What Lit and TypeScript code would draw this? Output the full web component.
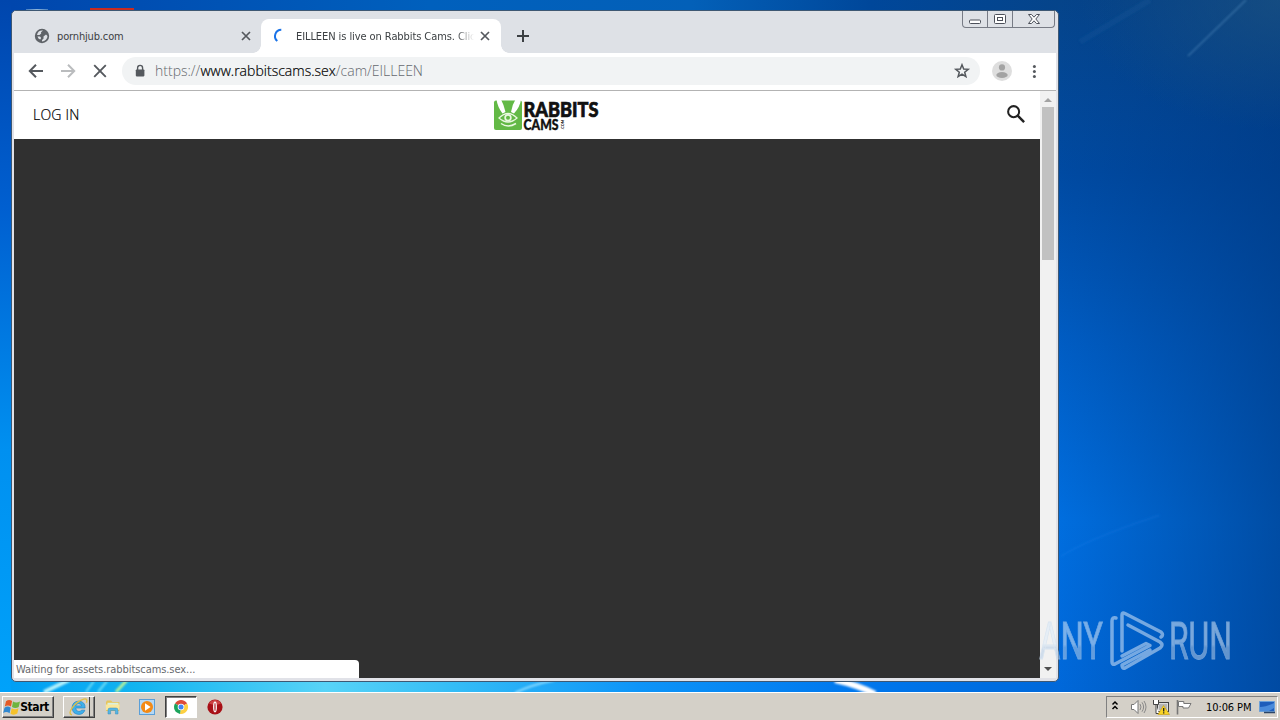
import { LitElement, html, css, svg } from 'lit';
import { customElement, property } from 'lit/decorators.js';

@customElement('desktop-wallpaper')
export class DesktopWallpaper extends LitElement {
  static styles = css`
    :host {
      display: block;
    }

    svg {
      display: block;
      width: 100%;
      height: 100%;
    }
  `;

  render() {
    return html`
      <svg viewBox="0 0 1280 692" preserveAspectRatio="none">
        <defs>
          <linearGradient id="left" x1="0" y1="0" x2="0" y2="1">
            <stop offset="0" stop-color="#0046ad" />
            <stop offset=".3" stop-color="#005fd0" />
            <stop offset=".65" stop-color="#0090f0" />
            <stop offset="1" stop-color="#00a2fa" />
          </linearGradient>
          <linearGradient id="top">
            <stop offset="0" stop-color="#0046ad" />
            <stop offset=".4" stop-color="#0060bd" />
            <stop offset=".65" stop-color="#0360b8" />
            <stop offset=".82" stop-color="#00479a" />
            <stop offset="1" stop-color="#05448a" />
          </linearGradient>
          <linearGradient id="bottom">
            <stop offset="0" stop-color="#009ff5" />
            <stop offset=".12" stop-color="#12b4f0" />
            <stop offset=".3" stop-color="#58d3f7" />
            <stop offset=".42" stop-color="#35bdf6" />
            <stop offset=".6" stop-color="#0d94f8" />
            <stop offset=".8" stop-color="#0078ee" />
            <stop offset="1" stop-color="#0068da" />
          </linearGradient>
          <linearGradient id="right" x1="0" y1="0" x2="0" y2="1">
            <stop offset="0" stop-color="#05448a" />
            <stop offset=".25" stop-color="#004aa2" />
            <stop offset=".5" stop-color="#005dc4" />
            <stop offset=".75" stop-color="#006edf" />
            <stop offset="1" stop-color="#0068da" />
          </linearGradient>
          <linearGradient id="shade">
            <stop offset="0" stop-color="#003880" stop-opacity="0" />
            <stop offset="1" stop-color="#003880" stop-opacity=".62" />
          </linearGradient>
          <radialGradient id="haze" cx="1" cy="0" r="1">
            <stop offset="0" stop-color="#215680" stop-opacity=".6" />
            <stop offset="1" stop-color="#215680" stop-opacity="0" />
          </radialGradient>
          <filter id="soft"><feGaussianBlur stdDeviation="1" /></filter>
        </defs>
        <rect width="30" height="692" fill="url(#left)" />
        <rect x="11" width="1048" height="20" fill="url(#top)" />
        <rect x="11" y="675" width="1048" height="17" fill="url(#bottom)" />
        <rect x="1058" width="222" height="692" fill="url(#right)" />
        <rect x="1058" width="222" height="692" fill="url(#shade)" />
        <rect x="1080" width="200" height="130" fill="url(#haze)" />
        <path d="M90 8h44v3H90z" fill="#c92b20" />
        <path d="M26 10q11-1 22 0" fill="none" stroke="#8eb5d8" />
        <g filter="url(#soft)" fill="none">
          <path d="M1246 0L1188 56" stroke="#5d96c6" stroke-width="1.500" opacity=".5" />
          <path d="M1150 0L1080 42" stroke="#2f70ad" stroke-width="6" opacity=".15" />
          <path d="M1060 557Q1085 540 1160 515" stroke="#2b91ff" stroke-width="3" opacity=".1" />
          <path d="M69 680L44 692" stroke="#b8f2fb" stroke-width="4" />
          <path d="M94 681L86 692M107 681L98 692" stroke="#8be7f5" stroke-width="2" opacity=".8" />
          <path d="M127 680L116 692" stroke="#b7f29a" stroke-width="3" />
          <path d="M555 680Q530 685 515 693" stroke="#8fdcff" stroke-width="2" />
          <path d="M835 680Q858 685 875 694" stroke="#fff" stroke-width="6" />
        </g>
      </svg>
    `;
  }
}

@customElement('tool-icon')
export class ToolIcon extends LitElement {
  @property() name = '';

  static styles = css`
    :host {
      display: block;
      flex: none;
      width: 16px;
      height: 16px;
    }

    svg {
      display: block;
      width: 100%;
      height: 100%;
      overflow: visible;
    }
  `;

  static shapes: Record<string, unknown> = {
    globe: svg`
      <circle cx="8" cy="8" r="7.200" fill="#5f6368" />
      <path d="M9 2.600L7 4.200 7.200 5.600 5.500 7H3A5.600 5.600 0 0 1 9 2.600zM9.500 8.500L12 6.500 13.500 8A5.600 5.600 0 0 1 8 13.500V12L9.500 10.800zM3.500 8.600H6L7.200 10 6.200 11.500Q4 11 3.500 8.600z" fill="#dee1e6" />`,
    close: svg`<path d="M4 4l8 8M12 4l-8 8" stroke="#55595e" stroke-width="1.700" />`,
    plus: svg`<path d="M8 2v12M2 8h12" stroke="#3c4043" stroke-width="2" />`,
    spinner: svg`<path d="M8.300 1.700A6.400 6.400 0 0 0 4.300 13" fill="none" stroke="#1a73e8" stroke-width="2" />`,
    back: svg`<path d="M15 8H2M8 1.800L1.800 8 8 14.200" fill="none" stroke="#55595e" stroke-width="2" />`,
    forward: svg`<path d="M1 8h13M8 1.800L14.200 8 8 14.200" fill="none" stroke="#babcbe" stroke-width="2" />`,
    stop: svg`<path d="M2.200 2.200l11.600 11.600M13.800 2.200L2.200 13.800" stroke="#55595e" stroke-width="1.900" />`,
    lock: svg`
      <rect x="3.800" y="6.400" width="8.600" height="7" rx=".8" fill="#55595e" />
      <path d="M5.600 7V4.900a2.500 2.500 0 0 1 5 0V7" fill="none" stroke="#55595e" stroke-width="1.400" />`,
    star: svg`<path d="M8 1.800L9.700 6 14.200 6.300 10.700 9.200 11.900 13.700 8 11.200 4.100 13.700 5.300 9.200 1.800 6.300 6.300 6z" fill="none" stroke="#55595e" stroke-width="1.500" />`,
    avatar: svg`
      <circle cx="8" cy="8" r="10" fill="#dedede" />
      <circle cx="8" cy="4.400" r="3.100" fill="#a3a3a3" />
      <ellipse cx="8" cy="12" rx="5.700" ry="3" fill="#a3a3a3" />`,
    menu: svg`
      <circle cx="8.400" cy="3.400" r="1.500" fill="#55595e" />
      <circle cx="8.400" cy="8.400" r="1.500" fill="#55595e" />
      <circle cx="8.400" cy="13.400" r="1.500" fill="#55595e" />`,
    search: svg`
      <path d="M9.300 9.300l5.900 5.900" stroke="#222" stroke-width="2.200" />
      <circle cx="5.900" cy="5.900" r="4.900" fill="none" stroke="#222" stroke-width="1.800" />`,
    minimize: svg`<rect x="2.500" y="9" width="11" height="3.500" rx="1" fill="#fff" stroke="#4c505a" />`,
    maximize: svg`
      <rect x="2.500" y="3.500" width="11" height="9" rx="1" fill="#fff" stroke="#4c505a" />
      <rect x="5.500" y="6.500" width="5" height="3" fill="#fff" stroke="#4c505a" />`,
    quit: svg`
      <path d="M2.500 3.500h3L8 6.200l2.500-2.700h3L9.800 8l3.700 4.500h-3L8 9.800l-2.500 2.700h-3L6.200 8z" fill="#fff" stroke="#4c505a" />`,
    windows: svg`
      <path d="M2 2.200Q5-.2 8.100 2L7 7.600Q4 5.600.8 7.600z" fill="#e45a26" />
      <path d="M9 2.500Q12 4.300 16 2.500L14.700 8Q11.500 10 8 8z" fill="#6eb43f" />
      <path d="M.5 8.800Q3.600 6.500 6.700 8.700L5.600 14.300Q2.500 12-.8 14z" fill="#3188d0" />
      <path d="M7.700 9.200Q11 11.200 14.500 9.200L13.300 14.600Q10 16.800 6.500 14.800z" fill="#f6c22b" />`,
    explorer: svg`
      <path d="M14.300 8.900H5.900Q6.200 12 8.800 12q1.700 0 2.300-1.200h3Q12.800 14.600 8.600 14.600 3 14.200 2.700 8.700 3 3 8.600 2.800q6 .3 5.700 6.100zM5.900 7h5.300Q10.900 5 8.600 5 6.300 5 5.900 7z" fill="#3fb0ea" stroke="#2383c6" stroke-width=".6" />
      <path d="M2.600 15Q-1 14 3 8.500T13 1q4-1 2.500 3.300" fill="none" stroke="#e2bf43" stroke-width="1.200" />`,
    folder: svg`
      <path d="M1 3l1-1.500h4L7.500 3h6.800v9H1z" fill="#e7c55b" />
      <path d="M2.500 3.800h11v5H2.500z" fill="#d9f0de" />
      <path d="M.7 5.500h14l-.6 5.500H1z" fill="#fae79b" />
      <path d="M3 15v-4q0-2 2-2h6q2 0 2 2v4h-2.600v-3.500H5.600V15z" fill="#55b5e3" stroke="#398eba" stroke-width=".5" />`,
    player: svg`
      <rect x=".5" y=".5" width="15" height="15" fill="#b4d8f5" stroke="#5a9fd8" />
      <circle cx="8" cy="8" r="6" fill="#f38a15" />
      <path d="M6 4.300L11.600 8 6 11.700z" fill="#fff" />`,
    chrome: svg`
      <path d="M8 8L2 4.500A7 7 0 0 1 14.100 4.600z" fill="#dd4b39" />
      <path d="M8 8l6.100-3.500A7 7 0 0 1 8 15l-1-.1z" fill="#fdd042" />
      <path d="M8 8l-1 6.900A7 7 0 0 1 2 4.400z" fill="#1ca45c" />
      <circle cx="8" cy="8" r="3.300" fill="#fff" />
      <circle cx="8" cy="8" r="2.500" fill="#4285f4" />`,
    opera: svg`
      <circle cx="8" cy="8" r="7.600" fill="#a80f16" />
      <path d="M2 4.500a7 7 0 0 1 12 0Q8 7 2 4.500z" fill="#dc5555" opacity=".7" />
      <ellipse cx="8" cy="8" rx="1.900" ry="5.400" fill="#fff" />
      <ellipse cx="8" cy="8" rx=".6" ry="4.300" fill="#a80f16" />`,
    chevrons: svg`<path d="M5.500 5.500L8 3l2.500 2.500M5.500 10L8 7.500l2.500 2.500" fill="none" stroke="#000" stroke-width="1.500" />`,
    volume: svg`
      <path d="M1.500 5.500H4L8 1.500v13L4 10.500H1.500z" fill="#fff" stroke="#777" />
      <path d="M10 5q2 3 0 6M12 3.300q3.200 4.700 0 9.400M14 2q4 6 0 12" fill="none" stroke="#898989" />`,
    network: svg`
      <rect x="4.500" y="3.500" width="11" height="9" fill="#ddd" stroke="#444" />
      <path d="M6 5h8v6H6z" fill="#b5b5b5" />
      <path d="M.5 1v4.500h5V1M3 5.500v9h3" fill="#fff" stroke="#444" />
      <path d="M1 1.500h4V5H1z" fill="#fff" />
      <path d="M10.500 6.500L16.500 15.500H5z" fill="#f9d425" stroke="#c69b0a" stroke-width=".6" />
      <path d="M10.700 9v3.400M10.700 13.300v1.200" stroke="#222" stroke-width="1.300" />`,
    flag: svg`
      <path d="M1.500 1v14.500" stroke="#777" stroke-width="1.600" />
      <path d="M2.500 2.500h5.300v2H15L12.500 9H7V7.500H2.500z" fill="#fff" stroke="#777" />`,
    monitor: svg`
      <path d="M.5 2.500h15v10H.5z" fill="#1e5dbb" stroke="#6ba0d9" />
      <path d="M1 8Q7 8 15 4v5L10 12H1z" fill="#4a8bdb" />
      <path d="M5 13.500h11" stroke="#2b4568" stroke-width="1.500" />`,
    up: svg`<path d="M4 11l4-4 4 4z" fill="#a3a3a3" />`,
    down: svg`<path d="M4 5h8L8 9z" fill="#505050" />`,
  };

  render() {
    return html`<svg viewBox="0 0 16 16">${ToolIcon.shapes[this.name]}</svg>`;
  }
}

@customElement('browser-window')
export class BrowserWindow extends LitElement {
  static styles = css`
    :host {
      display: flex;
      flex-direction: column;
      box-sizing: border-box;
      border: 1px solid #3e5873;
      border-radius: 5px;
      padding: 0 2px 3px;
      background: #e1e2e8;
      overflow: hidden;
      font-family: 'DejaVu Sans Condensed', 'DejaVu Sans', sans-serif;
      font-stretch: condensed;
      font-size: 11px;
      color: #3c4043;
    }

    .tabs {
      position: relative;
      display: flex;
      height: 42px;
      padding-left: 7px;
      box-sizing: border-box;
      background: #dee1e6;
      align-items: flex-end;
    }

    .tab {
      position: relative;
      display: flex;
      align-items: center;
      box-sizing: border-box;
      width: 240px;
      height: 34px;
      padding: 0 7px 0 13px;
    }

    .tab.active {
      background: #fff;
      border-radius: 8px 8px 0 0;
      padding: 0 8px 0 12px;
    }

    .tab.active::before,
    .tab.active::after {
      content: '';
      position: absolute;
      bottom: 0;
      width: 8px;
      height: 8px;
    }

    .tab.active::before {
      left: -8px;
      background: radial-gradient(circle at 0 0, transparent 7.5px, #fff 8px);
    }

    .tab.active::after {
      right: -8px;
      background: radial-gradient(circle at 100% 0, transparent 7.5px, #fff 8px);
    }

    .title {
      flex: 1;
      margin: 0 7px;
      letter-spacing: -0.15px;
      white-space: nowrap;
      overflow: hidden;
    }

    .active .title {
      margin: 0 3px 0 7px;
      letter-spacing: -0.08px;
      mask-image: linear-gradient(90deg, #000 90%, transparent);
    }

    .new {
      margin: 0 0 9px 14px;
    }

    .controls {
      position: absolute;
      top: 0;
      right: 1px;
      display: flex;
      box-sizing: border-box;
      width: 93px;
      height: 17px;
      border: 1px solid #777b85;
      border-top: 0;
      border-radius: 0 0 4px 4px;
    }

    .control {
      display: flex;
      justify-content: center;
      width: 24px;
      border-right: 1px solid #777b85;
    }

    .control:last-child {
      flex: 1;
      border: 0;
    }

    .toolbar {
      display: flex;
      align-items: center;
      box-sizing: border-box;
      height: 38px;
      padding: 0 14px 2px;
      background: #fff;
      border-bottom: 1px solid #b3b3b3;
    }

    .nav {
      display: flex;
      gap: 16px;
    }

    .address {
      flex: 1;
      display: flex;
      align-items: center;
      height: 28px;
      margin: 0 14px;
      padding: 0 10px;
      border-radius: 14px;
      background: #f1f3f4;
    }

    .url {
      flex: 1;
      margin-left: 7px;
      font: 300 14px 'Open Sans', 'Noto Sans', sans-serif;
      color: #65696e;
      white-space: nowrap;
    }

    .host {
      color: #000;
      -webkit-text-stroke: 0.2px #000;
      letter-spacing: 0.02px;
    }

    .menu {
      margin-left: 16px;
    }

    .body {
      flex: 1;
      display: flex;
      min-height: 0;
    }

    .page {
      flex: 1;
      display: flex;
      flex-direction: column;
      background: #303030;
    }

    .header {
      display: grid;
      grid-template-columns: 1fr auto 1fr;
      align-items: center;
      height: 48px;
      padding: 0 15px 0 19px;
      background: #fff;
    }

    .login {
      margin-bottom: 1px;
      font: 300 14px 'Open Sans', sans-serif;
      letter-spacing: 0.2px;
      color: #000;
      -webkit-text-stroke: 0.2px #000;
    }

    .logo {
      width: 106px;
      height: 34px;
      margin-left: 34px;
      overflow: visible;
    }

    .search {
      justify-self: end;
      width: 18px;
      height: 18px;
      margin-bottom: 2px;
    }

    .status {
      margin-top: auto;
      box-sizing: border-box;
      width: 345px;
      height: 18px;
      padding-left: 2px;
      border-radius: 0 4px 0 0;
      background: #fff;
      line-height: 19px;
      letter-spacing: -0.07px;
      color: #66696d;
    }

    .scrollbar {
      display: flex;
      flex-direction: column;
      align-items: center;
      width: 16px;
      background: #f1f1f1;
    }

    .thumb {
      width: 12px;
      height: 153px;
      background: #c1c1c1;
    }

    .down {
      margin-top: auto;
    }
  `;

  render() {
    return html`
      <div class="tabs">
        <div class="tab">
          <tool-icon name="globe"></tool-icon>
          <span class="title">pornhjub.com</span>
          <tool-icon name="close"></tool-icon>
        </div>
        <div class="tab active">
          <tool-icon name="spinner"></tool-icon>
          <span class="title">EILLEEN is live on Rabbits Cams. Clic</span>
          <tool-icon name="close"></tool-icon>
        </div>
        <tool-icon class="new" name="plus"></tool-icon>
        <div class="controls">
          <div class="control"><tool-icon name="minimize"></tool-icon></div>
          <div class="control"><tool-icon name="maximize"></tool-icon></div>
          <div class="control"><tool-icon name="quit"></tool-icon></div>
        </div>
      </div>
      <div class="toolbar">
        <div class="nav">
          <tool-icon name="back"></tool-icon>
          <tool-icon name="forward"></tool-icon>
          <tool-icon name="stop"></tool-icon>
        </div>
        <div class="address">
          <tool-icon name="lock"></tool-icon>
          <span class="url">https://<span class="host">www.rabbitscams.sex</span>/cam/EILLEEN</span>
          <tool-icon name="star"></tool-icon>
        </div>
        <tool-icon name="avatar"></tool-icon>
        <tool-icon class="menu" name="menu"></tool-icon>
      </div>
      <div class="body">
        <div class="page">
          <div class="header">
            <span class="login">LOG IN</span>
            ${this.renderLogo()}
            <tool-icon class="search" name="search"></tool-icon>
          </div>
          <div class="status">Waiting for assets.rabbitscams.sex...</div>
        </div>
        <div class="scrollbar">
          <tool-icon name="up"></tool-icon>
          <div class="thumb"></div>
          <tool-icon class="down" name="down"></tool-icon>
        </div>
      </div>
    `;
  }

  renderLogo() {
    return html`
      <svg class="logo" viewBox="0 0 106 34">
        <rect x="1" y="2.500" width="28" height="29.500" rx="2" fill="#63b946" />
        <path d="M3.500 1.500H8Q11 7 12.500 14L9.500 15.500Q4.500 9 3.500 1.500zM18 14Q19 7 22.500 1.500H28Q27 9 21 15.500z" fill="#fff" />
        <path d="M6 20Q15 11 24 20Q15 28 6 20z" fill="none" stroke="#e9f8df" stroke-width="1.300" />
        <circle cx="15" cy="19.800" r="3.700" fill="#e9f8df" />
        <circle cx="15" cy="19.800" r="2" fill="#63b946" />
        <path d="M8 25.500Q15 30.500 23 25.500" fill="none" stroke="#e9f8df" stroke-width="1.500" />
        <g font-family="Lato, sans-serif" font-weight="900" fill="#111">
          <text x="30.500" y="18.500" font-size="20.500" textLength="75" lengthAdjust="spacingAndGlyphs" stroke="#111" stroke-width=".7">RABBITS</text>
          <text x="30.500" y="32" font-size="15" textLength="35" lengthAdjust="spacingAndGlyphs" stroke="#111" stroke-width=".4">CAMS</text>
          <text transform="translate(70.500 31.500) rotate(-90)" font-size="4.500" textLength="10" lengthAdjust="spacingAndGlyphs">.COM</text>
        </g>
      </svg>
    `;
  }
}

@customElement('task-bar')
export class TaskBar extends LitElement {
  static styles = css`
    :host {
      display: flex;
      align-items: center;
      box-sizing: border-box;
      padding: 1px 2px 0;
      border-top: 1px solid #fff;
      background: #d4d0c8;
      font-family: 'DejaVu Sans Condensed', 'DejaVu Sans', sans-serif;
      font-stretch: condensed;
      font-size: 11px;
      color: #000;
    }

    .button {
      display: flex;
      align-items: center;
      justify-content: center;
      box-sizing: border-box;
      height: 22px;
      border: 1px solid;
      border-color: #fff #404040 #404040 #fff;
      box-shadow: inset -1px -1px #808080;
    }

    .start {
      width: 52px;
      padding-right: 3px;
      font-weight: bold;
      font-size: 12px;
      letter-spacing: -0.4px;
    }

    .group {
      justify-content: flex-start;
      width: 32px;
      margin-left: 9px;
      padding: 0 4px 0 5px;
    }

    .group tool-icon {
      width: 18px;
      height: 18px;
    }

    .edge {
      align-self: stretch;
      width: 1px;
      margin-left: auto;
      background: #404040;
    }

    .pinned {
      display: flex;
      align-items: center;
      margin-left: 10px;
      gap: 18px;
    }

    .pressed {
      width: 32px;
      margin: 0 -8px;
      border-color: #404040 #fff #fff #404040;
      box-shadow: inset 1px 1px #808080;
      background: #fff;
    }

    .tray {
      display: flex;
      align-items: center;
      box-sizing: border-box;
      width: 172px;
      height: 22px;
      margin-left: auto;
      border: 1px solid;
      border-color: #808080 #fff #fff #808080;
      gap: 8px;
    }

    .tray tool-icon + tool-icon {
      margin-left: -1px;
    }

    .clock {
      margin-left: 6px;
      letter-spacing: -0.1px;
      white-space: nowrap;
    }
  `;

  render() {
    return html`
      <div class="button start"><tool-icon name="windows"></tool-icon>Start</div>
      <div class="button group">
        <tool-icon name="explorer"></tool-icon>
        <div class="edge"></div>
      </div>
      <div class="pinned">
        <tool-icon name="folder"></tool-icon>
        <tool-icon name="player"></tool-icon>
        <div class="button pressed"><tool-icon name="chrome"></tool-icon></div>
        <tool-icon name="opera"></tool-icon>
      </div>
      <div class="tray">
        <tool-icon name="chevrons"></tool-icon>
        <tool-icon name="volume"></tool-icon>
        <tool-icon name="network"></tool-icon>
        <tool-icon name="flag"></tool-icon>
        <span class="clock">10:06 PM</span>
        <tool-icon name="monitor"></tool-icon>
      </div>
    `;
  }
}

@customElement('app-root')
export class AppRoot extends LitElement {
  static styles = css`
    :host {
      display: flex;
      flex-direction: column;
      width: 1280px;
      height: 720px;
      overflow: hidden;
    }

    .desktop {
      position: relative;
      flex: 1;
    }

    desktop-wallpaper {
      position: absolute;
      inset: 0;
    }

    browser-window {
      position: absolute;
      left: 11px;
      top: 10px;
      width: 1048px;
      height: 672px;
    }

    task-bar {
      height: 28px;
    }

    .watermark {
      position: absolute;
      left: 1036px;
      top: 606px;
      width: 200px;
      height: 70px;
      overflow: visible;
      opacity: 0.55;
    }
  `;

  render() {
    return html`
      <div class="desktop">
        <desktop-wallpaper></desktop-wallpaper>
        <browser-window></browser-window>
        <svg class="watermark" viewBox="0 0 200 70">
          <defs>
            <linearGradient id="mark" x1="0" y1="0" x2="0" y2="1">
              <stop offset="0" stop-color="#d7e9fa" />
              <stop offset=".55" stop-color="#e0ecf8" />
              <stop offset=".6" stop-color="#b3cbe5" />
              <stop offset="1" stop-color="#b9d0e9" />
            </linearGradient>
          </defs>
          <g font-family="Roboto, sans-serif" font-size="51" fill="url(#mark)" stroke="#c8dcf0" stroke-width=".9">
            <text x="3" y="53" textLength="64" lengthAdjust="spacingAndGlyphs">ANY</text>
            <text x="133" y="53" textLength="63" lengthAdjust="spacingAndGlyphs">RUN</text>
          </g>
          <g fill="none" stroke="#d5e6f7" stroke-width="3.500" stroke-linejoin="round" stroke-linecap="round">
            <path d="M86 45V9Q86 6 89 7.500L125 26Q128 29 125 31" />
            <path d="M80 12Q76 11 76 15V56Q76 59 79 58L114 39.500L110 37.500L86 50" />
            <path d="M92 19L124 36Q128 39 124 42L89 62Q86 63 86 59L114 44" />
          </g>
        </svg>
      </div>
      <task-bar></task-bar>
    `;
  }
}
